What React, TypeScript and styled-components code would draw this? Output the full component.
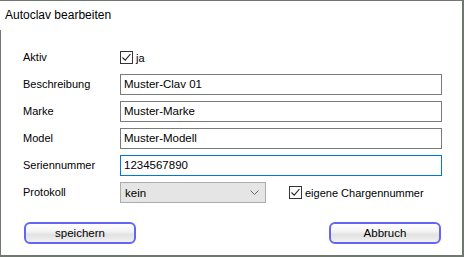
import styled, { createGlobalStyle } from 'styled-components';

const GlobalStyle = createGlobalStyle`
  html, body {
    margin: 0;
    padding: 0;
    background: #ffffff;
  }
  body {
    font-family: "Liberation Sans", Arial, sans-serif;
    font-size: 11px;
    color: #000;
  }
`;

const Window = styled.div`
  width: 462px;
  height: 254px;
  border-top: 1px solid #6f786f;
  border-right: 2px solid #6f786f;
  border-bottom: 2px solid #6f786f;
  display: flex;
  flex-direction: column;
  background: #fff;
`;

const TitleBar = styled.div`
  height: 29px;
  padding: 5px 0 0 5px;
  box-sizing: border-box;
  font-size: 12px;
  line-height: 18px;
`;

const Body = styled.div`
  flex: 1;
  border-left: 1px solid #6f786f;
  padding: 17px 0 0 22px;
  display: flex;
  flex-direction: column;
`;

const Form = styled.div`
  display: grid;
  grid-template-columns: 97px 1fr;
  row-gap: 6px;
  align-items: center;
`;

const Label = styled.div`
  line-height: 21px;
`;

const Input = styled.div<{ $focused?: boolean }>`
  width: 322px;
  height: 21px;
  box-sizing: border-box;
  border: 1px solid ${({ $focused }) => ($focused ? '#0078d7' : '#7a7a7a')};
  padding: 0 3px;
  line-height: 19px;
  font-size: 11.5px;
`;

const CheckRow = styled.div`
  display: flex;
  align-items: center;
  gap: 3px;
  height: 21px;
`;

const Box = styled.span`
  width: 13px;
  height: 13px;
  box-sizing: border-box;
  border: 1px solid #333;
  display: inline-flex;
  align-items: center;
  justify-content: center;
  background: #fff;
`;

const ProtoRow = styled.div`
  display: flex;
  align-items: center;
  gap: 23px;
`;

const Select = styled.div`
  width: 146px;
  height: 21px;
  box-sizing: border-box;
  border: 1px solid #adadad;
  background: #e5e5e5;
  padding: 0 6px 0 4px;
  display: flex;
  align-items: center;
  justify-content: space-between;
  font-size: 11.5px;
`;

const Buttons = styled.div`
  display: flex;
  justify-content: space-between;
  width: 417px;
  margin-top: 19px;
  margin-left: 1px;
`;

const Button = styled.div`
  width: 112px;
  height: 22px;
  box-sizing: border-box;
  border: 2px solid #6565f5;
  border-radius: 6px;
  background: linear-gradient(#ffffff 0%, #f4f4f4 40%, #e2e2e2 60%, #f1f1f1 100%);
  display: flex;
  align-items: center;
  justify-content: center;
  line-height: 16px;
  font-size: 11.5px;
`;

function Check() {
  return (
    <Box>
      <svg width="11" height="11" viewBox="0 0 11 11">
        <path d="M1.5 5.5 L4.2 8.2 L9.5 2" fill="none" stroke="#222" strokeWidth="1.1" />
      </svg>
    </Box>
  );
}

export default function App() {
  return (
    <>
      <GlobalStyle />
      <Window>
        <TitleBar>Autoclav bearbeiten</TitleBar>
        <Body>
          <Form>
            <Label>Aktiv</Label>
            <CheckRow>
              <Check />
              <span>ja</span>
            </CheckRow>
            <Label>Beschreibung</Label>
            <Input>Muster-Clav 01</Input>
            <Label>Marke</Label>
            <Input>Muster-Marke</Input>
            <Label>Model</Label>
            <Input>Muster-Modell</Input>
            <Label>Seriennummer</Label>
            <Input $focused>1234567890</Input>
            <Label>Protokoll</Label>
            <ProtoRow>
              <Select>
                <span>kein</span>
                <svg width="9" height="6" viewBox="0 0 9 6">
                  <path d="M0.5 0.5 L4.5 4.5 L8.5 0.5" fill="none" stroke="#666" strokeWidth="1" />
                </svg>
              </Select>
              <CheckRow>
                <Check />
                <span>eigene Chargennummer</span>
              </CheckRow>
            </ProtoRow>
          </Form>
          <Buttons>
            <Button>speichern</Button>
            <Button>Abbruch</Button>
          </Buttons>
        </Body>
      </Window>
    </>
  );
}
